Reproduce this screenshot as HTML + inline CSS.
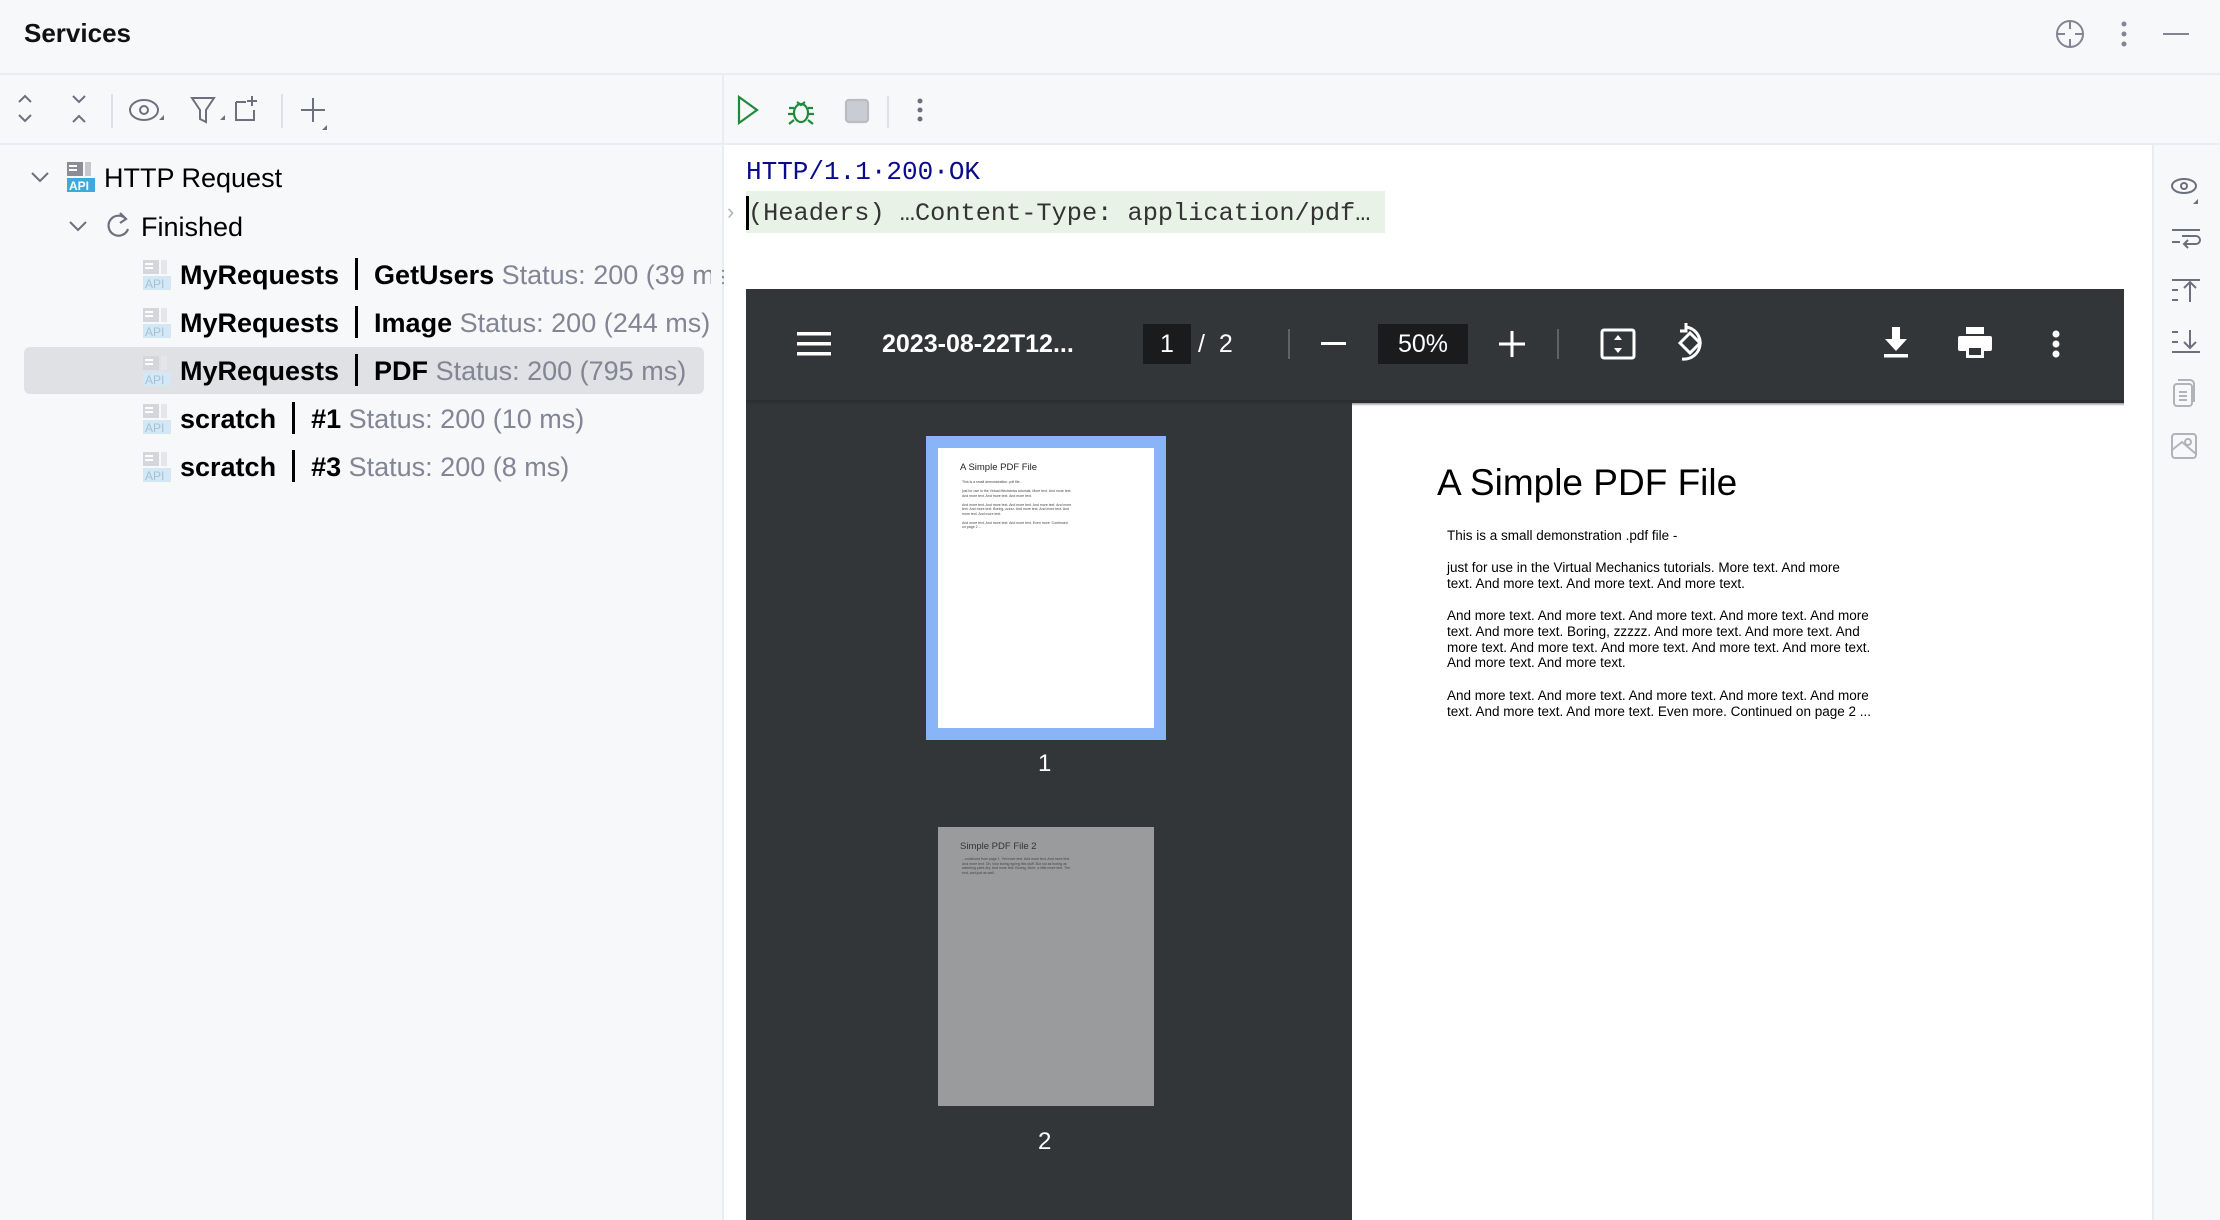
<!DOCTYPE html>
<html><head><meta charset="utf-8"><style>
*{margin:0;padding:0;box-sizing:border-box}
body{width:2220px;height:1220px;background:#f7f8fa;font-family:"Liberation Sans",sans-serif;position:relative;overflow:hidden;color:#000}
.a{position:absolute}
.t{white-space:nowrap}
.row{position:absolute;left:0;height:48px;font-size:27px;line-height:48px;white-space:nowrap}
.g{color:#818594}
.api{position:absolute;width:28px;height:30px}
.mono{font-family:"Liberation Mono",monospace}
.pt{font-size:13.5px;line-height:15.8px;color:#000;position:absolute;left:1447px;white-space:nowrap}
.bar{display:inline-block;width:3px;height:32px;background:#000;vertical-align:-6px;margin:0 16px 0 16px}
</style></head><body>
<!-- header -->
<div class="a t" style="left:24px;top:18px;font-size:26px;font-weight:bold;color:#111">Services</div>
<svg class="a" style="left:2054px;top:18px" width="32" height="32" viewBox="0 0 32 32" fill="none" stroke="#818594" stroke-width="2"><circle cx="16" cy="16" r="13"/><path d="M16 3v8M16 21v8M3 16h8M21 16h8"/></svg>
<svg class="a" style="left:2118px;top:20px" width="12" height="30"><circle cx="6" cy="4" r="2.5" fill="#818594"/><circle cx="6" cy="14" r="2.5" fill="#818594"/><circle cx="6" cy="24" r="2.5" fill="#818594"/></svg>
<div class="a" style="left:2163px;top:33px;width:26px;height:2px;background:#818594"></div>
<div class="a" style="left:0;top:73px;width:2220px;height:2px;background:#ebecf0"></div>
<!-- left toolbar -->
<svg class="a" style="left:10px;top:94px" width="330" height="40" fill="none" stroke="#6c707e" stroke-width="2">
<path d="M9 8l6-6 6 6M9 21l6 6 6-6"/>
<path d="M63 2l6 6 6-6M63 28l6-6 6 6"/>
<line x1="102" y1="0" x2="102" y2="34" stroke="#dfe1e5"/>
<ellipse cx="134" cy="16" rx="14" ry="10"/><circle cx="134" cy="16" r="4"/>
<path d="M182 4h22l-8 12v12l-6-3v-9z"/>
<path d="M226 8h10M226 8v18h18v-10M242 2v10M237 7h10"/>
<line x1="272" y1="0" x2="272" y2="34" stroke="#dfe1e5"/>
<path d="M291 16h24M303 4v24"/>
</svg>
<svg class="a" style="left:10px;top:94px" width="330" height="40"><path d="M149 26l5-5v5z M210 26l5-5v5z M312 36l5-5v5z" fill="#6c707e"/></svg>
<div class="a" style="left:0;top:143px;width:2220px;height:2px;background:#ebecf0"></div>
<div class="a" style="left:722px;top:75px;width:2px;height:1145px;background:#ebecf0"></div>
<!-- tree -->
<svg class="a" style="left:30px;top:170px" width="20" height="14" fill="none" stroke="#6c707e" stroke-width="2"><path d="M2 3l8 8 8-8"/></svg>
<svg class="api" style="left:67px;top:162px" viewBox="0 0 28 30"><rect x="0" y="0" width="16" height="14" fill="#8a8d96"/><rect x="2" y="3" width="8" height="2" fill="#fff"/><rect x="2" y="7" width="8" height="2" fill="#fff"/><rect x="18" y="0" width="6" height="14" fill="#c4c7ce"/><rect x="0" y="16" width="28" height="14" fill="#3fa8dc"/><text x="2" y="28" font-size="12" font-family="Liberation Sans" fill="#fff" font-weight="bold">API</text></svg>
<div class="row" style="left:104px;top:154px">HTTP Request</div>
<svg class="a" style="left:68px;top:219px" width="20" height="14" fill="none" stroke="#6c707e" stroke-width="2"><path d="M2 3l8 8 8-8"/></svg>
<svg class="a" style="left:106px;top:211px" width="26" height="30" fill="none" stroke="#6c707e" stroke-width="2.2"><path d="M20 8a10 10 0 1 0 2 10"/><path d="M14 2l6 6-6 4"/></svg>
<div class="row" style="left:141px;top:203px">Finished</div>
<div class="a" style="left:24px;top:347px;width:680px;height:47px;background:#dfe1e5;border-radius:6px"></div>
<!-- items -->
<svg width="0" height="0" style="position:absolute"><defs><g id="ap"><rect x="0" y="0" width="16" height="14" fill="#d4d6dc"/><rect x="2" y="3" width="8" height="2" fill="#fff"/><rect x="2" y="7" width="8" height="2" fill="#fff"/><rect x="18" y="0" width="6" height="14" fill="#e4e6ea"/><rect x="0" y="16" width="28" height="14" fill="#d3e8f4"/><text x="2" y="28" font-size="12" font-family="Liberation Sans" fill="#9cc4dc">API</text></g></defs></svg>
<svg class="api" style="left:143px;top:260px"><use href="#ap"/></svg>
<div class="row" style="left:180px;top:251px"><b>MyRequests</b><span class="bar"></span><b>GetUsers</b> <span class="g">Status: 200 (39 ms)</span></div>
<svg class="api" style="left:143px;top:308px"><use href="#ap"/></svg>
<div class="row" style="left:180px;top:299px"><b>MyRequests</b><span class="bar"></span><b>Image</b> <span class="g">Status: 200 (244 ms)</span></div>
<svg class="api" style="left:143px;top:356px"><use href="#ap"/></svg>
<div class="row" style="left:180px;top:347px"><b>MyRequests</b><span class="bar"></span><b>PDF</b> <span class="g">Status: 200 (795 ms)</span></div>
<svg class="api" style="left:143px;top:404px"><use href="#ap"/></svg>
<div class="row" style="left:180px;top:395px"><b>scratch</b><span class="bar"></span><b>#1</b> <span class="g">Status: 200 (10 ms)</span></div>
<svg class="api" style="left:143px;top:452px"><use href="#ap"/></svg>
<div class="row" style="left:180px;top:443px"><b>scratch</b><span class="bar"></span><b>#3</b> <span class="g">Status: 200 (8 ms)</span></div>
<div class="a" style="left:711px;top:145px;width:11px;height:1075px;background:#f7f8fa"></div>
<!-- right toolbar -->
<svg class="a" style="left:736px;top:94px" width="200" height="36" fill="none" stroke-width="2.2">
<path d="M3 3v26l18-13z" stroke="#208a3c"/>
<g stroke="#208a3c"><ellipse cx="65" cy="19" rx="7" ry="9"/><path d="M61 8l4 3 4-3M58 14h-5M72 14h5M58 20h-6M72 20h6M58 26l-5 4M72 26l5 4"/></g>
<rect x="110" y="6" width="22" height="22" rx="3" fill="#c9ccd3" stroke="#b9bcc3"/>
<line x1="152" y1="2" x2="152" y2="34" stroke="#dfe1e5"/>
<g fill="#6c707e" stroke="none"><circle cx="184" cy="7" r="2.5"/><circle cx="184" cy="16" r="2.5"/><circle cx="184" cy="25" r="2.5"/></g>
</svg>
<!-- editor area -->
<div class="a" style="left:724px;top:145px;width:1428px;height:1075px;background:#fff"></div>
<div class="a" style="left:2152px;top:145px;width:2px;height:1075px;background:#ebecf0"></div>
<div class="a mono t" style="left:746px;top:155px;font-size:26px;line-height:34px;color:#0a0a8c">HTTP/1.1·200·OK</div>
<div class="a" style="left:746px;top:191px;width:639px;height:42px;background:#e8f2e6"></div>
<div class="a" style="left:746px;top:196px;width:3px;height:34px;background:#000"></div>
<div class="a t" style="left:727px;top:199px;color:#b0b3ba;font-size:22px">›</div>
<div class="a mono t" style="left:748px;top:197px;font-size:25.3px;line-height:34px;color:#333">(Headers) …Content-Type: application/pdf…</div>
<!-- right strip icons -->
<svg class="a" style="left:2168px;top:170px" width="40" height="310" fill="none" stroke="#6c707e" stroke-width="2">
<ellipse cx="16" cy="16" rx="12" ry="7"/><circle cx="16" cy="16" r="3"/><path d="M30 34l-5 0 5-5z" fill="#6c707e" stroke="none"/>
<path d="M4 60h28M4 72h8M20 78l-4-4 4-4M16 74h12a4 4 0 0 0 0-8h-14"/>
<path d="M4 110h28M4 120h6M4 130h6M22 112v20M16 118l6-6 6 6"/>
<path d="M4 162h6M4 172h6M4 182h28M22 160v18M16 172l6 6 6-6"/>
<g stroke="#b0b3ba"><rect x="6" y="214" width="18" height="22" rx="3"/><path d="M10 210h12a4 4 0 0 1 4 4v18M11 222h8M11 226h8M11 230h8"/>
<rect x="4" y="264" width="24" height="24" rx="3"/><circle cx="20" cy="272" r="3"/><path d="M4 280l10-8 14 12"/></g>
</svg>
<!-- pdf viewer -->
<div class="a" style="left:746px;top:289px;width:1378px;height:931px;background:#323639"></div>
<div class="a" style="left:1352px;top:403px;width:772px;height:817px;background:#fff"></div>
<div class="a" style="left:746px;top:400px;width:1378px;height:6px;background:linear-gradient(#2a2d30,rgba(0,0,0,0))"></div>
<!-- toolbar -->
<svg class="a" style="left:797px;top:330px" width="34" height="28" fill="#fff"><rect x="0" y="2" width="34" height="3.5"/><rect x="0" y="12" width="34" height="3.5"/><rect x="0" y="22" width="34" height="3.5"/></svg>
<div class="a t" style="left:882px;top:327px;font-size:25px;color:#fff;font-weight:bold;line-height:34px">2023-08-22T12...</div>
<div class="a" style="left:1143px;top:324px;width:48px;height:40px;background:#191b1c"></div>
<div class="a t" style="left:1160px;top:327px;font-size:25px;color:#fff;line-height:34px">1</div>
<div class="a t" style="left:1198px;top:327px;font-size:25px;color:#fff;line-height:34px">/&nbsp; 2</div>
<div class="a" style="left:1288px;top:329px;width:2px;height:30px;background:#5f6368"></div>
<div class="a" style="left:1321px;top:342px;width:25px;height:3px;background:#fff"></div>
<div class="a" style="left:1378px;top:324px;width:90px;height:40px;background:#191b1c"></div>
<div class="a t" style="left:1398px;top:327px;font-size:25px;color:#fff;line-height:34px">50%</div>
<svg class="a" style="left:1499px;top:331px" width="26" height="26" fill="#fff"><rect x="0" y="11.5" width="26" height="3"/><rect x="11.5" y="0" width="3" height="26"/></svg>
<div class="a" style="left:1557px;top:329px;width:2px;height:30px;background:#5f6368"></div>
<svg class="a" style="left:1600px;top:326px" width="36" height="36" fill="none" stroke="#fff" stroke-width="3"><rect x="2" y="4" width="32" height="28" rx="2"/><path d="M18 9l-4 5h8zM18 27l-4-5h8z" fill="#fff" stroke="none"/></svg>
<svg class="a" style="left:1672px;top:323px" width="36" height="40" fill="none" stroke="#fff" stroke-width="3"><path d="M18 10l-10 10 10 10 10-10z"/><path d="M14 4a16 16 0 1 1 -4 32"/><path d="M14 0v8h-6" /></svg>
<svg class="a" style="left:1882px;top:327px" width="28" height="32" fill="#fff"><path d="M10 0h8v12h7l-11 12-11-12h7z"/><rect x="2" y="27" width="24" height="3.5"/></svg>
<svg class="a" style="left:1958px;top:327px" width="34" height="32" fill="#fff"><rect x="8" y="0" width="18" height="7"/><rect x="0" y="9" width="34" height="15" rx="2"/><rect x="8" y="19" width="18" height="12"/><rect x="11" y="21" width="12" height="7" fill="#323639"/></svg>
<svg class="a" style="left:2050px;top:330px" width="12" height="30" fill="#fff"><circle cx="6" cy="4" r="3.5"/><circle cx="6" cy="14" r="3.5"/><circle cx="6" cy="24" r="3.5"/></svg>
<!-- thumbnails -->
<div class="a" style="left:926px;top:436px;width:240px;height:304px;background:#8ab4f8"></div>
<div class="a" style="left:938px;top:448px;width:216px;height:280px;background:#fff"></div>
<div class="a t" style="left:960px;top:462px;font-size:9.5px;color:#222">A Simple PDF File</div>
<div class="a" style="left:962px;top:480px;width:110px;font-size:3.5px;line-height:4.5px;color:#444">This is a small demonstration .pdf file -<br><br>just for use in the Virtual Mechanics tutorials. More text. And more text. And more text. And more text. And more text.<br><br>And more text. And more text. And more text. And more text. And more text. And more text. Boring, zzzzz. And more text. And more text. And more text. And more text.<br><br>And more text. And more text. And more text. Even more. Continued on page 2 ...</div>
<div class="a t" style="left:1038px;top:750px;font-size:24px;color:#fff">1</div>
<div class="a" style="left:938px;top:827px;width:216px;height:279px;background:#9a9b9c"></div>
<div class="a t" style="left:960px;top:841px;font-size:9.5px;color:#333">Simple PDF File 2</div>
<div class="a" style="left:962px;top:857px;width:110px;font-size:3.5px;line-height:4.5px;color:#444">...continued from page 1. Yet more text. And more text. And more text. And more text. Oh, how boring typing this stuff. But not as boring as watching paint dry. And more text. Boring. More, a little more text. The end, and just as well.</div>
<div class="a t" style="left:1038px;top:1128px;font-size:24px;color:#fff">2</div>
<!-- page -->
<div class="a t" style="left:1437px;top:462px;font-size:37px;color:#000">A Simple PDF File</div>
<div class="pt" style="top:528px">This is a small demonstration .pdf file -</div>
<div class="pt" style="top:560px">just for use in the Virtual Mechanics tutorials. More text. And more<br>text. And more text. And more text. And more text.</div>
<div class="pt" style="top:608px">And more text. And more text. And more text. And more text. And more<br>text. And more text. Boring, zzzzz. And more text. And more text. And<br>more text. And more text. And more text. And more text. And more text.<br>And more text. And more text.</div>
<div class="pt" style="top:688px">And more text. And more text. And more text. And more text. And more<br>text. And more text. And more text. Even more. Continued on page 2 ...</div>
</body></html>
